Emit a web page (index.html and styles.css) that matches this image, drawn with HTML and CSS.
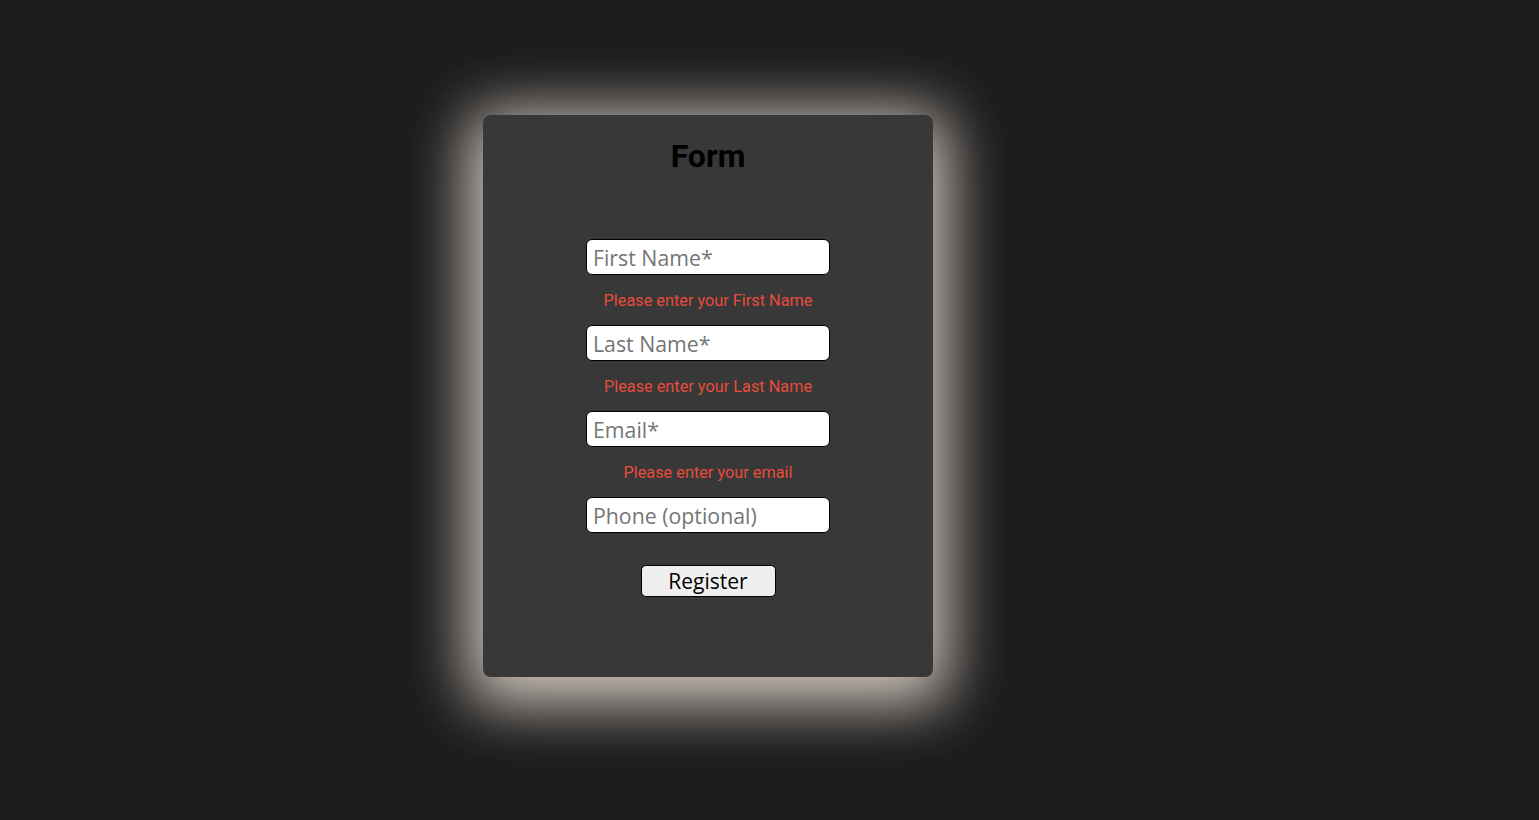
FILE: index.html
```html
<!DOCTYPE html>
<html>
<head>
<meta charset="utf-8">
<link rel="stylesheet" href="styles.css">
</head>
<body>
<div class="page">
  <form class="card">
    <h1 class="title">Form</h1>
    <div class="fields">
      <input class="field" type="text" placeholder="First Name*">
      <p class="error">Please enter your First Name</p>
      <input class="field" type="text" placeholder="Last Name*">
      <p class="error">Please enter your Last Name</p>
      <input class="field" type="text" placeholder="Email*">
      <p class="error">Please enter your email</p>
      <input class="field" type="text" placeholder="Phone (optional)">
      <button class="btn" type="button">Register</button>
    </div>
  </form>
</div>
</body>
</html>
```
FILE: styles.css
```css
html, body {
  margin: 0;
  padding: 0;
  background: #1b1b1b;
  height: 100%;
}
.page {
  display: flex;
  padding: 115px 0 0 483px;
}
.card {
  box-sizing: border-box;
  width: 450px;
  height: 562px;
  background: #383838;
  border-radius: 8px;
  box-shadow: 0 12px 62px 15px #d4cac2;
  padding-top: 22px;
  display: flex;
  flex-direction: column;
  align-items: center;
}
.title {
  margin: 0;
  font-family: Roboto, "Liberation Sans", sans-serif;
  font-weight: 700;
  font-size: 32px;
  line-height: 38px;
  color: #000;
}
.fields {
  margin-top: 64px;
  display: flex;
  flex-direction: column;
  align-items: center;
}
.field {
  box-sizing: border-box;
  width: 244px;
  height: 36px;
  border: 1px solid #000;
  border-radius: 6px;
  background: #fff;
  padding: 0 5px 0 6px;
  font-family: "Open Sans", sans-serif;
  font-size: 21.3px;
  color: #000;
  outline: none;
}
.field::placeholder {
  color: #757575;
}
.error {
  margin: 16px 0 14px;
  font-family: Roboto, "Liberation Sans", sans-serif;
  font-size: 16.3px;
  line-height: 20px;
  color: #e74c3c;
}
.btn {
  box-sizing: border-box;
  margin-top: 32px;
  width: 135px;
  height: 32px;
  background: #efefef;
  border: 1px solid #000;
  border-radius: 5px;
  font-family: "Open Sans", sans-serif;
  font-size: 21px;
  line-height: 28px;
  color: #000;
  padding: 0;
}
```
